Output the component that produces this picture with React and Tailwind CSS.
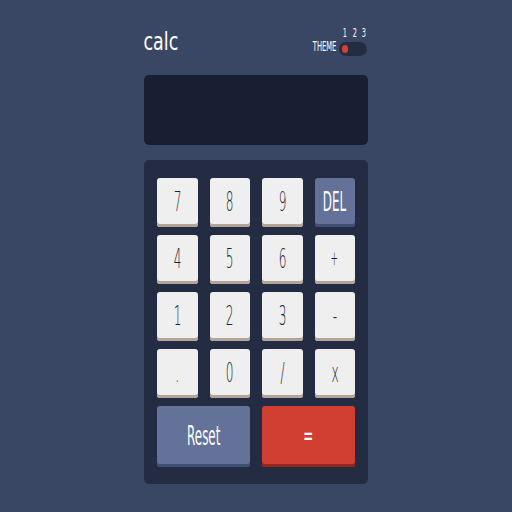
import React from "react";

const F = { fontFamily: '"DejaVu Sans", sans-serif' };

function Key({ label, kind = "num", wide = false }) {
  const base =
    kind === "num"
      ? "bg-[#efefef] text-[#1f2333] shadow-[inset_0_-3px_0_#b3a497]"
      : kind === "blue"
      ? "bg-[#647198] text-white shadow-[inset_0_-3px_0_#414e73]"
      : "bg-[#d03f2f] text-white shadow-[inset_0_-3px_0_#93261a]";
  const size = label === "+" ? "text-[20px]" : "text-[27px]";
  return (
    <div
      className={`${base} ${wide ? "col-span-2 h-[61px]" : "h-[49px]"} rounded-[3px] flex items-center justify-center pb-[3px]`}
      style={F}
    >
      <span
        className={`inline-block leading-none ${size} ${kind === "num" ? "font-light scale-x-[0.45]" : "font-normal scale-x-[0.44]"}`}
        style={F}
      >
        {label}
      </span>
    </div>
  );
}

export default function App() {
  const rows = [
    ["7", "8", "9", "DEL"],
    ["4", "5", "6", "+"],
    ["1", "2", "3", "-"],
    [".", "0", "/", "x"],
  ];
  return (
    <div className="w-[512px] h-[512px] bg-[#3a4764] flex justify-center" style={F}>
      <div className="w-[224px] flex flex-col pt-[28px]">
        <div className="flex justify-between items-end h-[28px]">
          <div className="text-white leading-none pb-[2px] -ml-[8px]">
            <span className="inline-block text-[25px] scale-x-[0.7] font-normal" style={F}>calc</span>
          </div>
          <div className="flex items-end gap-[4px]">
            <div className="text-white leading-none pb-[2px] -mr-[14px]">
              <span className="inline-block text-[13.5px] scale-x-[0.5] font-normal" style={F}>THEME</span>
            </div>
            <div className="flex flex-col items-center gap-[3px]">
              <div className="flex gap-[2px] text-white text-[12px] leading-none pl-[3px]" style={F}>
                <span className="inline-block scale-x-[0.55] font-normal">1</span>
                <span className="inline-block scale-x-[0.55] font-normal">2</span>
                <span className="inline-block scale-x-[0.55] font-normal">3</span>
              </div>
              <div className="w-[28px] h-[14px] rounded-full bg-[#232c43] flex items-center px-[3px]">
                <div className="w-[6px] h-[8px] rounded-full bg-[#d03f2f]" />
              </div>
            </div>
          </div>
        </div>
        <div className="mt-[19px] h-[70px] rounded-[5px] bg-[#181f33]" />
        <div className="mt-[15px] rounded-[5px] bg-[#232c43] px-[13px] pt-[18px] pb-[17px]">
          <div className="grid grid-cols-4 gap-x-[12px] gap-y-[8px]">
            {rows.flat().map((k) => (
              <Key key={k} label={k} kind={k === "DEL" ? "blue" : "num"} />
            ))}
            <Key label="Reset" kind="blue" wide />
            <Key label="=" kind="red" wide />
          </div>
        </div>
      </div>
    </div>
  );
}
